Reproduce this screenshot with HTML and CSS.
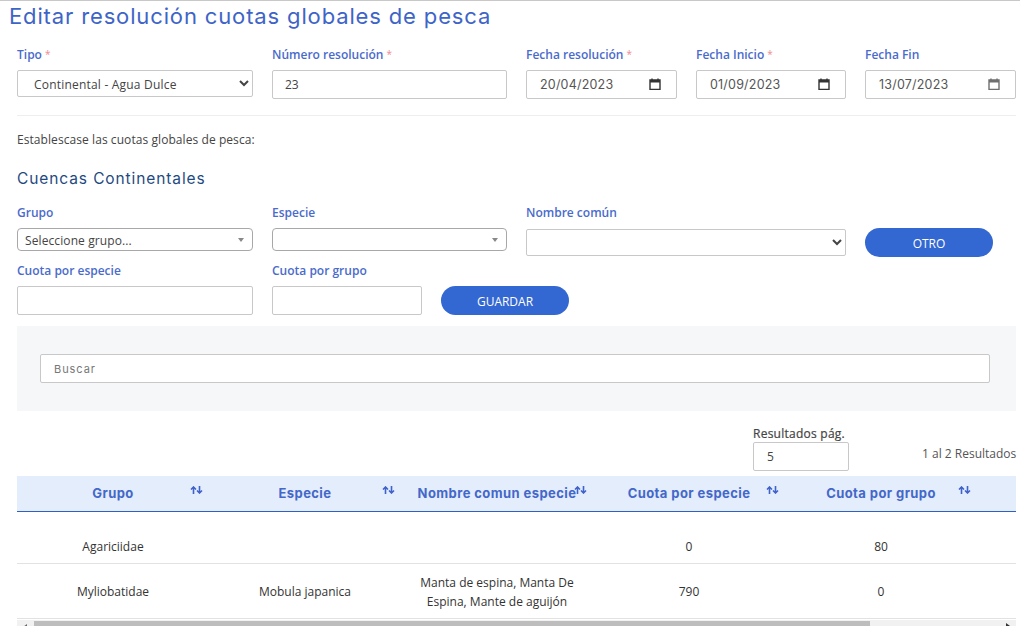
FILE: index.html
```html
<!DOCTYPE html>
<html lang="es">
<head>
<meta charset="utf-8">
<title>Editar resolución cuotas globales de pesca</title>
<link rel="stylesheet" href="styles.css">
</head>
<body>
<main class="page">
  <h1 class="title">Editar resolución cuotas globales de pesca</h1>
  <form class="form">
    <div class="row row-top">
      <div class="field w236"><label class="label">Tipo <span class="req">*</span></label>
        <select class="control select"><option>Continental - Agua Dulce</option></select></div>
      <div class="field w235"><label class="label">Número resolución <span class="req">*</span></label>
        <input class="control input" value="23"></div>
      <div class="field w151"><label class="label">Fecha resolución <span class="req">*</span></label>
        <div class="date"><input class="control input date-input" value="20/04/2023"><svg class="cal" viewBox="0 0 12 12"><path d="M1 2h10v9.500H1z M3 .5v2M9 .5v2" fill="none" stroke="#333" stroke-width="1.400"/><path d="M1 2h10v2.500H1z" fill="#333"/></svg></div></div>
      <div class="field w150"><label class="label">Fecha Inicio <span class="req">*</span></label>
        <div class="date"><input class="control input date-input" value="01/09/2023"><svg class="cal" viewBox="0 0 12 12"><path d="M1 2h10v9.500H1z M3 .5v2M9 .5v2" fill="none" stroke="#333" stroke-width="1.400"/><path d="M1 2h10v2.500H1z" fill="#333"/></svg></div></div>
      <div class="field w151"><label class="label">Fecha Fin</label>
        <div class="date"><input class="control input date-input" value="13/07/2023"><svg class="cal cal-soft" viewBox="0 0 12 12"><path d="M1 2h10v9.500H1z M3 .5v2M9 .5v2" fill="none" stroke="#333" stroke-width="1.400"/><path d="M1 2h10v2.500H1z" fill="#333"/></svg></div></div>
    </div>
    <hr class="rule">
    <p class="intro">Establescase las cuotas globales de pesca:</p>
    <h2 class="subtitle">Cuencas Continentales</h2>
    <div class="row row-grupo">
      <div class="field w236"><label class="label">Grupo</label>
        <div class="combo"><span>Seleccione grupo...</span><i class="caret"></i></div></div>
      <div class="field w235"><label class="label">Especie</label>
        <div class="combo"><span></span><i class="caret"></i></div></div>
      <div class="field w320"><label class="label">Nombre común</label>
        <select class="control select short"><option></option></select></div>
      <button type="button" class="btn btn-otro">OTRO</button>
    </div>
    <div class="row row-cuota">
      <div class="field w236"><label class="label">Cuota por especie</label>
        <input class="control input"></div>
      <div class="field w150"><label class="label">Cuota por grupo</label>
        <input class="control input"></div>
      <button type="button" class="btn">GUARDAR</button>
    </div>
  </form>

  <section class="search-panel">
    <input class="search" placeholder="Buscar">
  </section>

  <div class="results">
    <div class="per-page">
      <label class="per-label">Resultados pág.</label>
      <input class="control input per-input" value="5">
    </div>
    <span class="count">1 al 2 Resultados</span>
  </div>

  <div class="table-wrap">
    <table class="table">
      <thead>
        <tr>
          <th><span class="th">Grupo</span><svg class="sort" viewBox="0 0 13 8"><path d="M3.500 8V1.500M1 3.500 3.500 1 6 3.500M9.500 0v6.500M7 4.500 9.500 7 12 4.500" fill="none" stroke="#3f63c8" stroke-width="1.600"/></svg></th>
          <th><span class="th">Especie</span><svg class="sort" viewBox="0 0 13 8"><path d="M3.500 8V1.500M1 3.500 3.500 1 6 3.500M9.500 0v6.500M7 4.500 9.500 7 12 4.500" fill="none" stroke="#3f63c8" stroke-width="1.600"/></svg></th>
          <th><span class="th">Nombre comun especie</span><svg class="sort" viewBox="0 0 13 8"><path d="M3.500 8V1.500M1 3.500 3.500 1 6 3.500M9.500 0v6.500M7 4.500 9.500 7 12 4.500" fill="none" stroke="#3f63c8" stroke-width="1.600"/></svg></th>
          <th><span class="th">Cuota por especie</span><svg class="sort" viewBox="0 0 13 8"><path d="M3.500 8V1.500M1 3.500 3.500 1 6 3.500M9.500 0v6.500M7 4.500 9.500 7 12 4.500" fill="none" stroke="#3f63c8" stroke-width="1.600"/></svg></th>
          <th><span class="th">Cuota por grupo</span><svg class="sort" viewBox="0 0 13 8"><path d="M3.500 8V1.500M1 3.500 3.500 1 6 3.500M9.500 0v6.500M7 4.500 9.500 7 12 4.500" fill="none" stroke="#3f63c8" stroke-width="1.600"/></svg></th>
          <th class="spare"></th>
        </tr>
      </thead>
      <tbody>
        <tr class="row1"><td>Agariciidae</td><td></td><td></td><td>0</td><td>80</td><td></td></tr>
        <tr class="row2"><td>Myliobatidae</td><td>Mobula japanica</td><td>Manta de espina, Manta De Espina, Mante de aguijón</td><td>790</td><td>0</td><td></td></tr>
      </tbody>
    </table>
  </div>
  <div class="scrollbar">
    <span class="arrow-left"></span>
    <span class="thumb"></span>
    <span class="arrow-right"></span>
  </div>
</main>
</body>
</html>
```
FILE: styles.css
```css
* { box-sizing: border-box; }
html, body { margin: 0; height: 100%; overflow: hidden; background: #fff; }
body { font-family: "Open Sans", sans-serif; font-size: 12px; color: #333; }
.page { border-top: 1px solid #c8c8c8; height: 626px; overflow: hidden; padding: 0 4px 0 17px; }
.title { margin: 0 0 0 -8px; height: 44px; padding-top: 1px; font-family: Inter, sans-serif; font-weight: 400; font-size: 22px; line-height: 28px; letter-spacing: .86px; color: #3e64c8; white-space: nowrap; }
.row { display: flex; gap: 19px; }
.field { display: flex; flex-direction: column; }
.w236 { width: 236px; }
.w235 { width: 235px; }
.w151 { width: 151px; }
.w150 { width: 150px; }
.w320 { width: 320px; }
.label { font-size: 12px; font-weight: 600; line-height: 18px; height: 25px; color: #4a6bcb; }
.row-top .label { padding-top: 1px; }
.req { color: #f08a90; font-size: 10px; font-weight: 400; line-height: 0; vertical-align: 1px; }
.control { height: 29px; border: 1px solid #c8c8c8; border-radius: 2px; background: #fff; font-family: "Open Sans", sans-serif; font-size: 12px; color: #444; width: 100%; outline: none; }
.input { padding: 0 12px; }
.select { height: 27px; padding: 2px 0 0 12px; letter-spacing: .2px; }
.short { height: 27px; }
.date { position: relative; display: flex; }
.date-input { font-family: Inter, sans-serif; font-size: 12.500px; letter-spacing: .2px; padding-left: 13px; color: #555; }
.cal { position: absolute; right: 16px; top: 8px; width: 12px; height: 12px; }
.cal-soft { opacity: .7; }
.rule { border: 0; border-top: 1px solid #eee; margin: 16px 0 0; width: 999px; }
.intro { margin: 15px 0 0; line-height: 18px; height: 18px; font-size: 12px; letter-spacing: .07px; color: #444; }
.subtitle { margin: 19px 0 0; font-family: Inter, sans-serif; font-weight: 400; font-size: 15.500px; line-height: 22px; letter-spacing: .9px; color: #1f4a80; height: 22px; white-space: nowrap; }
.row-grupo { margin-top: 14px; height: 58px; }
.row-grupo .label { height: 24px; }
.row-grupo .select { margin-top: 1px; }
.combo { display: flex; align-items: center; justify-content: space-between; height: 23px; border: 1px solid #a8a8a8; border-radius: 4px; padding: 1px 8px 0 7px; font-size: 12px; letter-spacing: .1px; color: #444; }
.caret { width: 0; height: 0; border-left: 3.500px solid transparent; border-right: 3.500px solid transparent; border-top: 4px solid #888; }
.btn { height: 29px; width: 128px; border: 0; border-radius: 15px; padding: 1px 0 0; background: #3367d1; color: #fff; font-family: "Open Sans", sans-serif; font-size: 12px; align-self: flex-end; }
.btn-otro { align-self: flex-start; margin-top: 24px; }
.row-cuota .label { height: 24px; }
.search-panel { margin-top: 11px; width: 999px; height: 85px; padding: 28px 26px 0 23px; background: #f6f7f9; }
.search { display: block; width: 100%; height: 29px; border: 1px solid #c8c8c8; border-radius: 2px; background: #fff; padding: 0 13px; font-family: Inter, sans-serif; font-size: 11px; letter-spacing: .95px; outline: none; }
.search::placeholder { color: #777; opacity: 1; }
.results { display: flex; justify-content: flex-end; width: 999px; height: 65px; padding-top: 14px; }
.per-page { display: flex; flex-direction: column; width: 96px; margin-right: 79px; }
.per-label { line-height: 17px; height: 17px; color: #444; white-space: nowrap; font-size: 12px; font-weight: 400; letter-spacing: .25px; -webkit-text-stroke: .2px #444; }
.per-input { width: 96px; padding-left: 13px; }
.count { margin-top: 20px; margin-left: -6px; width: 94px; white-space: nowrap; line-height: 18px; color: #555; }
.table-wrap { width: 999px; overflow: hidden; }
.table { border-collapse: collapse; width: 1190px; table-layout: fixed; }
thead th { position: relative; height: 35px; background: #e3edfc; border-bottom: 1px solid #3060c0; width: 192px; padding: 0; text-align: center; font-family: Inter, sans-serif; font-size: 13px; font-weight: 700; letter-spacing: .42px; color: #4467c9; white-space: nowrap; }
.th { display: inline-block; }
.sort { position: absolute; right: 6px; top: 10px; width: 13px; height: 8px; }
.spare { width: 230px; }
td { padding: 0 12px; text-align: center; font-size: 12px; line-height: 19px; color: #333; border-bottom: 1px solid #e2e2e2; }
.row1 td { height: 52px; padding-top: 18px; }
.row2 td { height: 55px; padding-top: 2px; }
.scrollbar { position: relative; display: flex; width: 999px; height: 17px; margin-top: 1px; padding-top: 1px; background: #f1f1f1; }
.arrow-left { width: 17px; flex: none; position: relative; }
.arrow-left::after { content: ""; position: absolute; left: 6px; top: 3px; border: 3px solid transparent; border-left: 0; border-right: 4px solid #666; }
.thumb { width: 836px; flex: none; background: #bdbdbd; }
.arrow-right { position: absolute; right: 6px; top: 3px; border: 3px solid transparent; border-right: 0; border-left: 4px solid #333; }
```
